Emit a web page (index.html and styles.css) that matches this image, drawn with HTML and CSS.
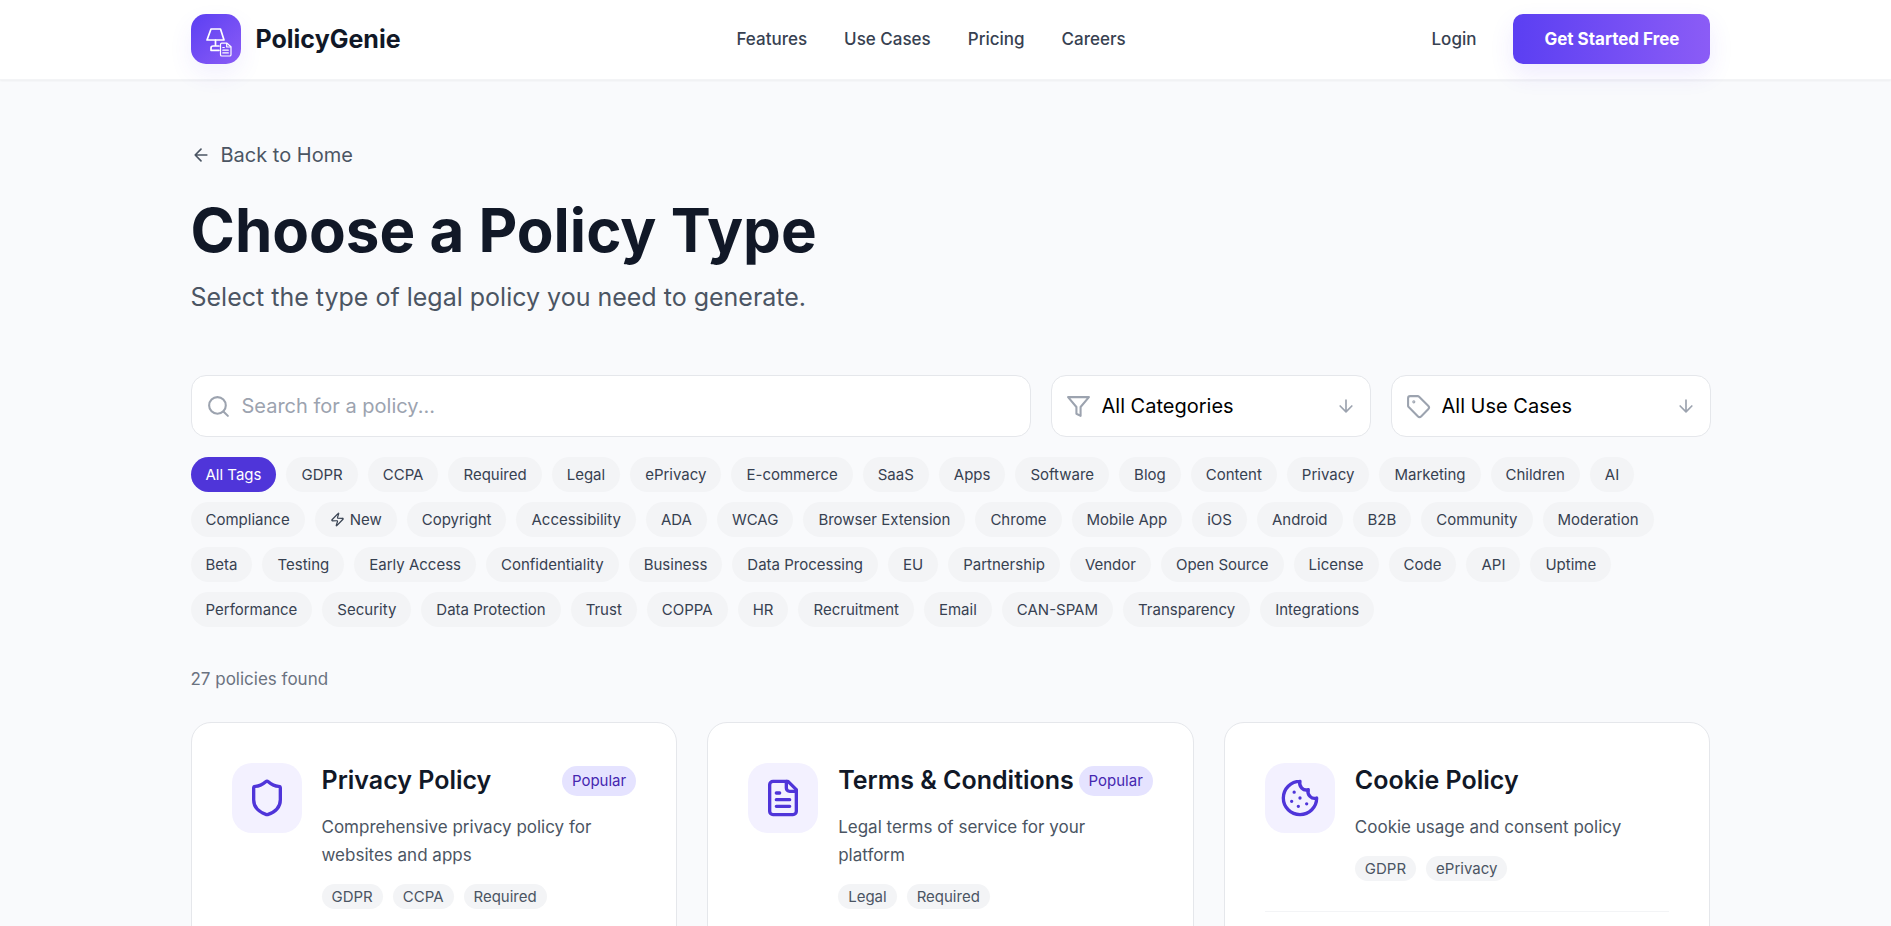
FILE: index.html
```html
<!DOCTYPE html>
<html lang="en">
  <head>
    <meta charset="UTF-8" />
    <meta name="viewport" content="width=device-width, initial-scale=1.0" />
    <title>PolicyGenie - Choose a Policy Type</title>
    <link rel="stylesheet" href="styles.css">
  </head>
  <body>
    <header class="site-header">
      <div class="container header-inner">
        <a href="#" class="brand">
          <span class="brand-logo">
            <svg viewBox="0 0 50 50" fill="none" stroke="currentColor" stroke-linejoin="round" stroke-linecap="round">
              <path d="M20 15h9.500l3.500 11H16z" stroke-width="1.700" />
              <path d="M24.500 26v5.500M28 36.300h-8v-2.300q0-2 2-2h6" stroke-width="1.700" />
              <path d="M30.800 29.200h5.200l4 3.500v8a1.300 1.300 0 0 1-1.300 1.300h-7.900a1.300 1.300 0 0 1-1.300-1.300v-10.200a1.300 1.300 0 0 1 1.300-1.300z" stroke-width="1.200" />
              <path d="M35.700 29.500v3.500h4M31.800 33.500h1.500M31.800 36.200h5.500M31.800 38.900h5.500" stroke-width="1.200" />
            </svg>
          </span>
          <span class="brand-name">PolicyGenie</span>
        </a>
        <nav class="main-nav">
          <a href="#">Features</a>
          <a href="#">Use Cases</a>
          <a href="#">Pricing</a>
          <a href="#">Careers</a>
        </nav>
        <div class="header-actions">
          <a href="#" class="login">Login</a>
          <button type="button" class="btn-primary">Get Started Free</button>
        </div>
      </div>
    </header>

    <main>
      <div class="container">
        <a href="#" class="back-link">
          <svg class="icon icon-sm" viewBox="0 0 24 24"><path d="m12 19-7-7 7-7M19 12H5" /></svg>
          Back to Home
        </a>
        <h1>Choose a Policy Type</h1>
        <p class="subtitle">Select the type of legal policy you need to generate.</p>

        <form class="filters">
          <div class="field field-search">
            <svg class="icon" viewBox="0 0 24 24"><circle cx="11" cy="11" r="8" /><path d="m21 21-4.300-4.300" /></svg>
            <input type="text" placeholder="Search for a policy..." aria-label="Search for a policy" />
          </div>
          <div class="field">
            <svg class="icon" viewBox="0 0 24 24"><path d="M22 3H2l8 9.460V19l4 2v-8.540z" /></svg>
            <select aria-label="Category">
              <option>All Categories</option>
            </select>
            <svg class="icon icon-sm icon-arrow" viewBox="0 0 24 24"><path d="M12 5v14M19 12l-7 7-7-7" /></svg>
          </div>
          <div class="field">
            <svg class="icon" viewBox="0 0 24 24"><path d="M12.586 2.586A2 2 0 0 0 11.172 2H4a2 2 0 0 0-2 2v7.172a2 2 0 0 0 .586 1.414l8.704 8.704a2.426 2.426 0 0 0 3.420 0l6.580-6.580a2.426 2.426 0 0 0 0-3.420z" /><circle cx="7.500" cy="7.500" r=".5" fill="currentColor" /></svg>
            <select aria-label="Use case">
              <option>All Use Cases</option>
            </select>
            <svg class="icon icon-sm icon-arrow" viewBox="0 0 24 24"><path d="M12 5v14M19 12l-7 7-7-7" /></svg>
          </div>
        </form>

        <div class="tags">
          <button type="button" class="tag active">All Tags</button>
          <button type="button" class="tag">GDPR</button>
          <button type="button" class="tag">CCPA</button>
          <button type="button" class="tag">Required</button>
          <button type="button" class="tag">Legal</button>
          <button type="button" class="tag">ePrivacy</button>
          <button type="button" class="tag">E-commerce</button>
          <button type="button" class="tag">SaaS</button>
          <button type="button" class="tag">Apps</button>
          <button type="button" class="tag">Software</button>
          <button type="button" class="tag">Blog</button>
          <button type="button" class="tag">Content</button>
          <button type="button" class="tag">Privacy</button>
          <button type="button" class="tag">Marketing</button>
          <button type="button" class="tag">Children</button>
          <button type="button" class="tag">AI</button>
          <button type="button" class="tag">Compliance</button>
          <button type="button" class="tag">
            <svg class="icon icon-xs" viewBox="0 0 24 24"><path d="M4 14a1 1 0 0 1-.780-1.630l9.900-10.200a.5.5 0 0 1 .860.460l-1.920 6.020A1 1 0 0 0 13 10h7a1 1 0 0 1 .780 1.630l-9.900 10.200a.5.5 0 0 1-.860-.460l1.920-6.020A1 1 0 0 0 11 14z" /></svg>New
          </button>
          <button type="button" class="tag">Copyright</button>
          <button type="button" class="tag">Accessibility</button>
          <button type="button" class="tag">ADA</button>
          <button type="button" class="tag">WCAG</button>
          <button type="button" class="tag">Browser Extension</button>
          <button type="button" class="tag">Chrome</button>
          <button type="button" class="tag">Mobile App</button>
          <button type="button" class="tag">iOS</button>
          <button type="button" class="tag">Android</button>
          <button type="button" class="tag">B2B</button>
          <button type="button" class="tag">Community</button>
          <button type="button" class="tag">Moderation</button>
          <button type="button" class="tag">Beta</button>
          <button type="button" class="tag">Testing</button>
          <button type="button" class="tag">Early Access</button>
          <button type="button" class="tag">Confidentiality</button>
          <button type="button" class="tag">Business</button>
          <button type="button" class="tag">Data Processing</button>
          <button type="button" class="tag">EU</button>
          <button type="button" class="tag">Partnership</button>
          <button type="button" class="tag">Vendor</button>
          <button type="button" class="tag">Open Source</button>
          <button type="button" class="tag">License</button>
          <button type="button" class="tag">Code</button>
          <button type="button" class="tag">API</button>
          <button type="button" class="tag">Uptime</button>
          <button type="button" class="tag">Performance</button>
          <button type="button" class="tag">Security</button>
          <button type="button" class="tag">Data Protection</button>
          <button type="button" class="tag">Trust</button>
          <button type="button" class="tag">COPPA</button>
          <button type="button" class="tag">HR</button>
          <button type="button" class="tag">Recruitment</button>
          <button type="button" class="tag">Email</button>
          <button type="button" class="tag">CAN-SPAM</button>
          <button type="button" class="tag">Transparency</button>
          <button type="button" class="tag">Integrations</button>
        </div>

        <p class="count">27 policies found</p>

        <section class="cards">
          <article class="card">
            <div class="card-body">
              <div class="card-icon">
                <svg class="icon" viewBox="0 0 24 24"><path d="M20 13c0 5-3.500 7.500-7.660 8.950a1 1 0 0 1-.670-.010C7.500 20.500 4 18 4 13V6a1 1 0 0 1 1-1c2 0 4.500-1.200 6.240-2.720a1.170 1.170 0 0 1 1.520 0C14.510 3.810 17 5 19 5a1 1 0 0 1 1 1z" /></svg>
              </div>
              <div class="card-text">
                <div class="card-head">
                  <h2>Privacy Policy</h2>
                  <span class="badge">Popular</span>
                </div>
                <p>Comprehensive privacy policy for websites and apps</p>
                <ul class="chips">
                  <li>GDPR</li>
                  <li>CCPA</li>
                  <li>Required</li>
                </ul>
              </div>
            </div>
            <div class="card-footer"></div>
          </article>

          <article class="card">
            <div class="card-body">
              <div class="card-icon">
                <svg class="icon" viewBox="0 0 24 24"><path d="M15 2H6a2 2 0 0 0-2 2v16a2 2 0 0 0 2 2h12a2 2 0 0 0 2-2V7z" /><path d="M14 2v4a2 2 0 0 0 2 2h4M10 9H8M16 13H8M16 17H8" /></svg>
              </div>
              <div class="card-text">
                <div class="card-head">
                  <h2>Terms &amp; Conditions</h2>
                  <span class="badge">Popular</span>
                </div>
                <p>Legal terms of service for your platform</p>
                <ul class="chips">
                  <li>Legal</li>
                  <li>Required</li>
                </ul>
              </div>
            </div>
            <div class="card-footer"></div>
          </article>

          <article class="card">
            <div class="card-body">
              <div class="card-icon">
                <svg class="icon" viewBox="0 0 24 24"><path d="M12 2a10 10 0 1 0 10 10 4 4 0 0 1-5-5 4 4 0 0 1-5-5" /><path d="M8.500 8.500v.010M16 15.500v.010M12 12v.010M11 17v.010M7 14v.010" /></svg>
              </div>
              <div class="card-text">
                <div class="card-head">
                  <h2>Cookie Policy</h2>
                </div>
                <p>Cookie usage and consent policy</p>
                <ul class="chips">
                  <li>GDPR</li>
                  <li>ePrivacy</li>
                </ul>
              </div>
            </div>
            <div class="card-footer"></div>
          </article>
        </section>
      </div>
    </main>
  </body>
</html>
```

FILE: styles.css
```css
* {
  box-sizing: border-box;
}
body {
  margin: 0;
  font-family: Inter, "Liberation Sans", sans-serif;
  font-size: 20px;
  line-height: 30px;
  color: #111827;
  background: #f9fafc;
}
h1,
h2,
p,
ul {
  margin: 0;
  padding: 0;
}
a {
  color: inherit;
  text-decoration: none;
}
button,
input,
select {
  font: inherit;
  cursor: pointer;
}

.icon {
  width: 25px;
  height: 25px;
  flex-shrink: 0;
  fill: none;
  stroke: currentColor;
  stroke-width: 2;
  stroke-linecap: round;
  stroke-linejoin: round;
}
.icon-sm {
  width: 20px;
  height: 20px;
}
.icon-xs {
  width: 15px;
  height: 15px;
}

.site-header,
main {
  padding-left: 10px;
}
.container {
  max-width: 1520px;
  margin: 0 auto;
}

/* header */
.site-header {
  height: 80px;
  background: #fff;
  border-bottom: 1px solid #f3f4f6;
  box-shadow: 0 1px 2px rgba(0, 0, 0, 0.05);
}
.header-inner {
  height: 78px;
  display: flex;
  align-items: center;
  justify-content: space-between;
}
.brand {
  display: flex;
  align-items: center;
  gap: 15px;
}
.brand-logo {
  width: 50px;
  height: 50px;
  border-radius: 15px;
  color: #fff;
  background: linear-gradient(135deg, #5b3ff2, #8b5cf6);
  box-shadow: 0 10px 25px rgba(91, 63, 242, 0.08);
}
.brand-logo svg {
  display: block;
}
.brand-name {
  font-size: 25px;
  font-weight: 700;
}
.main-nav {
  display: flex;
  gap: 37px;
  margin-left: 30px;
}
.main-nav,
.login {
  font-size: 17px;
  line-height: 32px;
  font-weight: 500;
  color: #374151;
}
.header-actions {
  display: flex;
  align-items: center;
  gap: 37px;
}
.btn-primary {
  height: 50px;
  padding: 0 31px;
  border: 0;
  border-radius: 10px;
  color: #fff;
  font-size: 17px;
  font-weight: 700;
  background: linear-gradient(90deg, #5b3ff2, #8b5cf6);
  box-shadow: 0 10px 25px rgba(91, 63, 242, 0.1);
}

/* page heading */
main {
  padding-top: 60px;
  padding-bottom: 60px;
}
.back-link {
  display: flex;
  align-items: center;
  gap: 10px;
  width: fit-content;
  color: #4b5563;
}
h1 {
  margin-top: 30px;
  font-size: 60px;
  line-height: 60px;
  font-weight: 700;
}
.subtitle {
  margin-top: 20px;
  font-size: 25px;
  line-height: 35px;
  color: #4b5563;
}

/* search and filters */
.filters {
  display: flex;
  gap: 20px;
  margin-top: 60px;
}
.field {
  position: relative;
  width: 320px;
  color: #9ca3af;
}
.field-search {
  flex: 1;
}
.field .icon {
  position: absolute;
  top: 19px;
  left: 15px;
  pointer-events: none;
}
.field .icon-arrow {
  top: 21px;
  left: auto;
  right: 15px;
}
.field input,
.field select {
  display: block;
  width: 100%;
  height: 62px;
  padding: 0 50px;
  border: 1px solid #e5e7eb;
  border-radius: 15px;
  background: #fff;
  color: #000;
  appearance: none;
}
.field input::placeholder {
  color: #9ca3af;
}

.tags {
  display: flex;
  flex-wrap: wrap;
  gap: 10px;
  margin-top: 20px;
}
.tag {
  display: flex;
  align-items: center;
  gap: 5px;
  height: 35px;
  padding: 0 15px;
  border: 0;
  border-radius: 18px;
  font-size: 15px;
  color: #374151;
  background: #f3f4f6;
}
.tag.active {
  color: #fff;
  background: #4f35d9;
}
.count {
  margin-top: 40px;
  font-size: 17px;
  line-height: 25px;
  color: #6b7280;
}

/* policy cards */
.cards {
  display: grid;
  grid-template-columns: repeat(3, 1fr);
  gap: 30px;
  margin-top: 30px;
}
.card {
  padding: 40px;
  border: 1px solid #e5e7eb;
  border-radius: 20px;
  background: #fff;
}
.card-body {
  display: flex;
  gap: 20px;
}
.card-icon {
  display: flex;
  align-items: center;
  justify-content: center;
  width: 70px;
  height: 70px;
  flex-shrink: 0;
  border-radius: 20px;
  color: #4f35d9;
  background: #f3f1ff;
}
.card-icon .icon {
  width: 40px;
  height: 40px;
}
.card-text {
  flex: 1;
}
.card-head {
  display: flex;
  align-items: center;
  justify-content: space-between;
}
.card h2 {
  font-size: 25px;
  line-height: 35px;
  font-weight: 600;
  white-space: nowrap;
}
.badge {
  padding: 0 10px;
  border-radius: 15px;
  font-size: 15px;
  color: #4527b0;
  background: #e5e3ff;
}
.card-text p {
  margin-top: 15px;
  font-size: 17px;
  line-height: 28px;
  color: #4b5563;
}
.chips {
  display: flex;
  gap: 10px;
  margin-top: 15px;
  list-style: none;
}
.chips li {
  padding: 0 10px;
  border-radius: 13px;
  font-size: 15px;
  line-height: 25px;
  color: #4b5563;
  background: #f3f4f6;
}
.card-footer {
  height: 50px;
  margin-top: 30px;
  border-top: 1px solid #f3f4f6;
}
```
